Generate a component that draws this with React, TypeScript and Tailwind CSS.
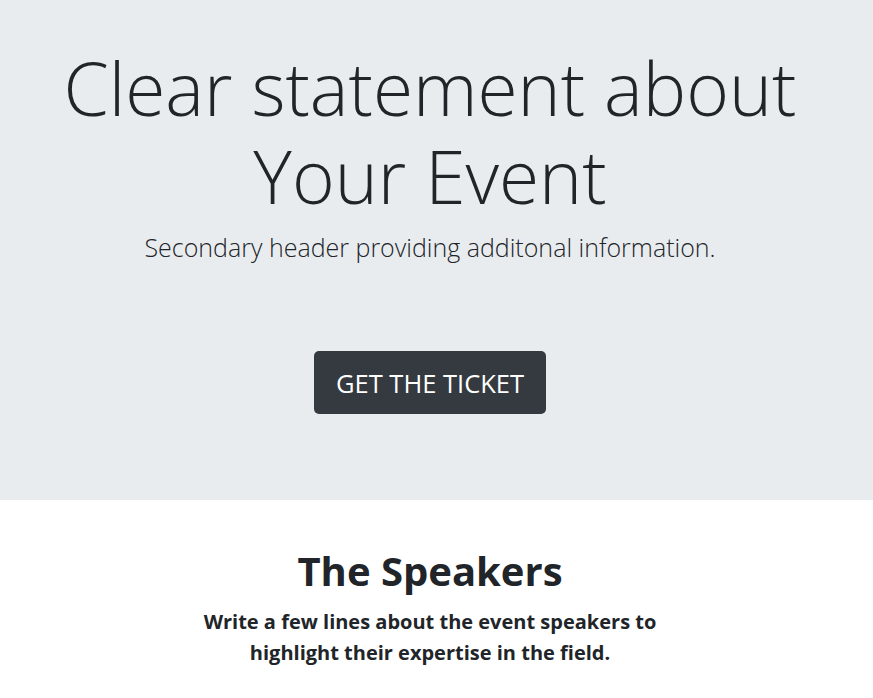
export default function App() {
  return (
    <div className="min-h-screen bg-white text-[#212529] font-['Open_Sans',sans-serif]">
      {/* Hero */}
      <section className="h-[500px] bg-[#e9ecef]">
        <div className="flex w-[860px] flex-col items-center pt-[44px] text-center">
          <h1 className="text-[73px] font-light leading-[1.2]">
            Clear statement about
            <br />
            Your Event
          </h1>
          <p className="mt-[10px] text-[25px] font-light leading-[36px]">
            Secondary header providing additonal information.
          </p>
          <button className="mt-[86px] h-[63px] w-[232px] rounded-[5px] bg-[#343a40] text-[25.5px] text-white">
            GET THE TICKET
          </button>
        </div>
      </section>

      {/* Speakers */}
      <section className="flex w-[860px] flex-col items-center pt-[47px] text-center">
        <h2 className="text-[40px] font-bold leading-[1.2]">The Speakers</h2>
        <p className="mt-[11px] text-[20px] font-bold leading-[31px]">
          Write a few lines about the event speakers to
          <br />
          highlight their expertise in the field.
        </p>
      </section>
    </div>
  )
}
